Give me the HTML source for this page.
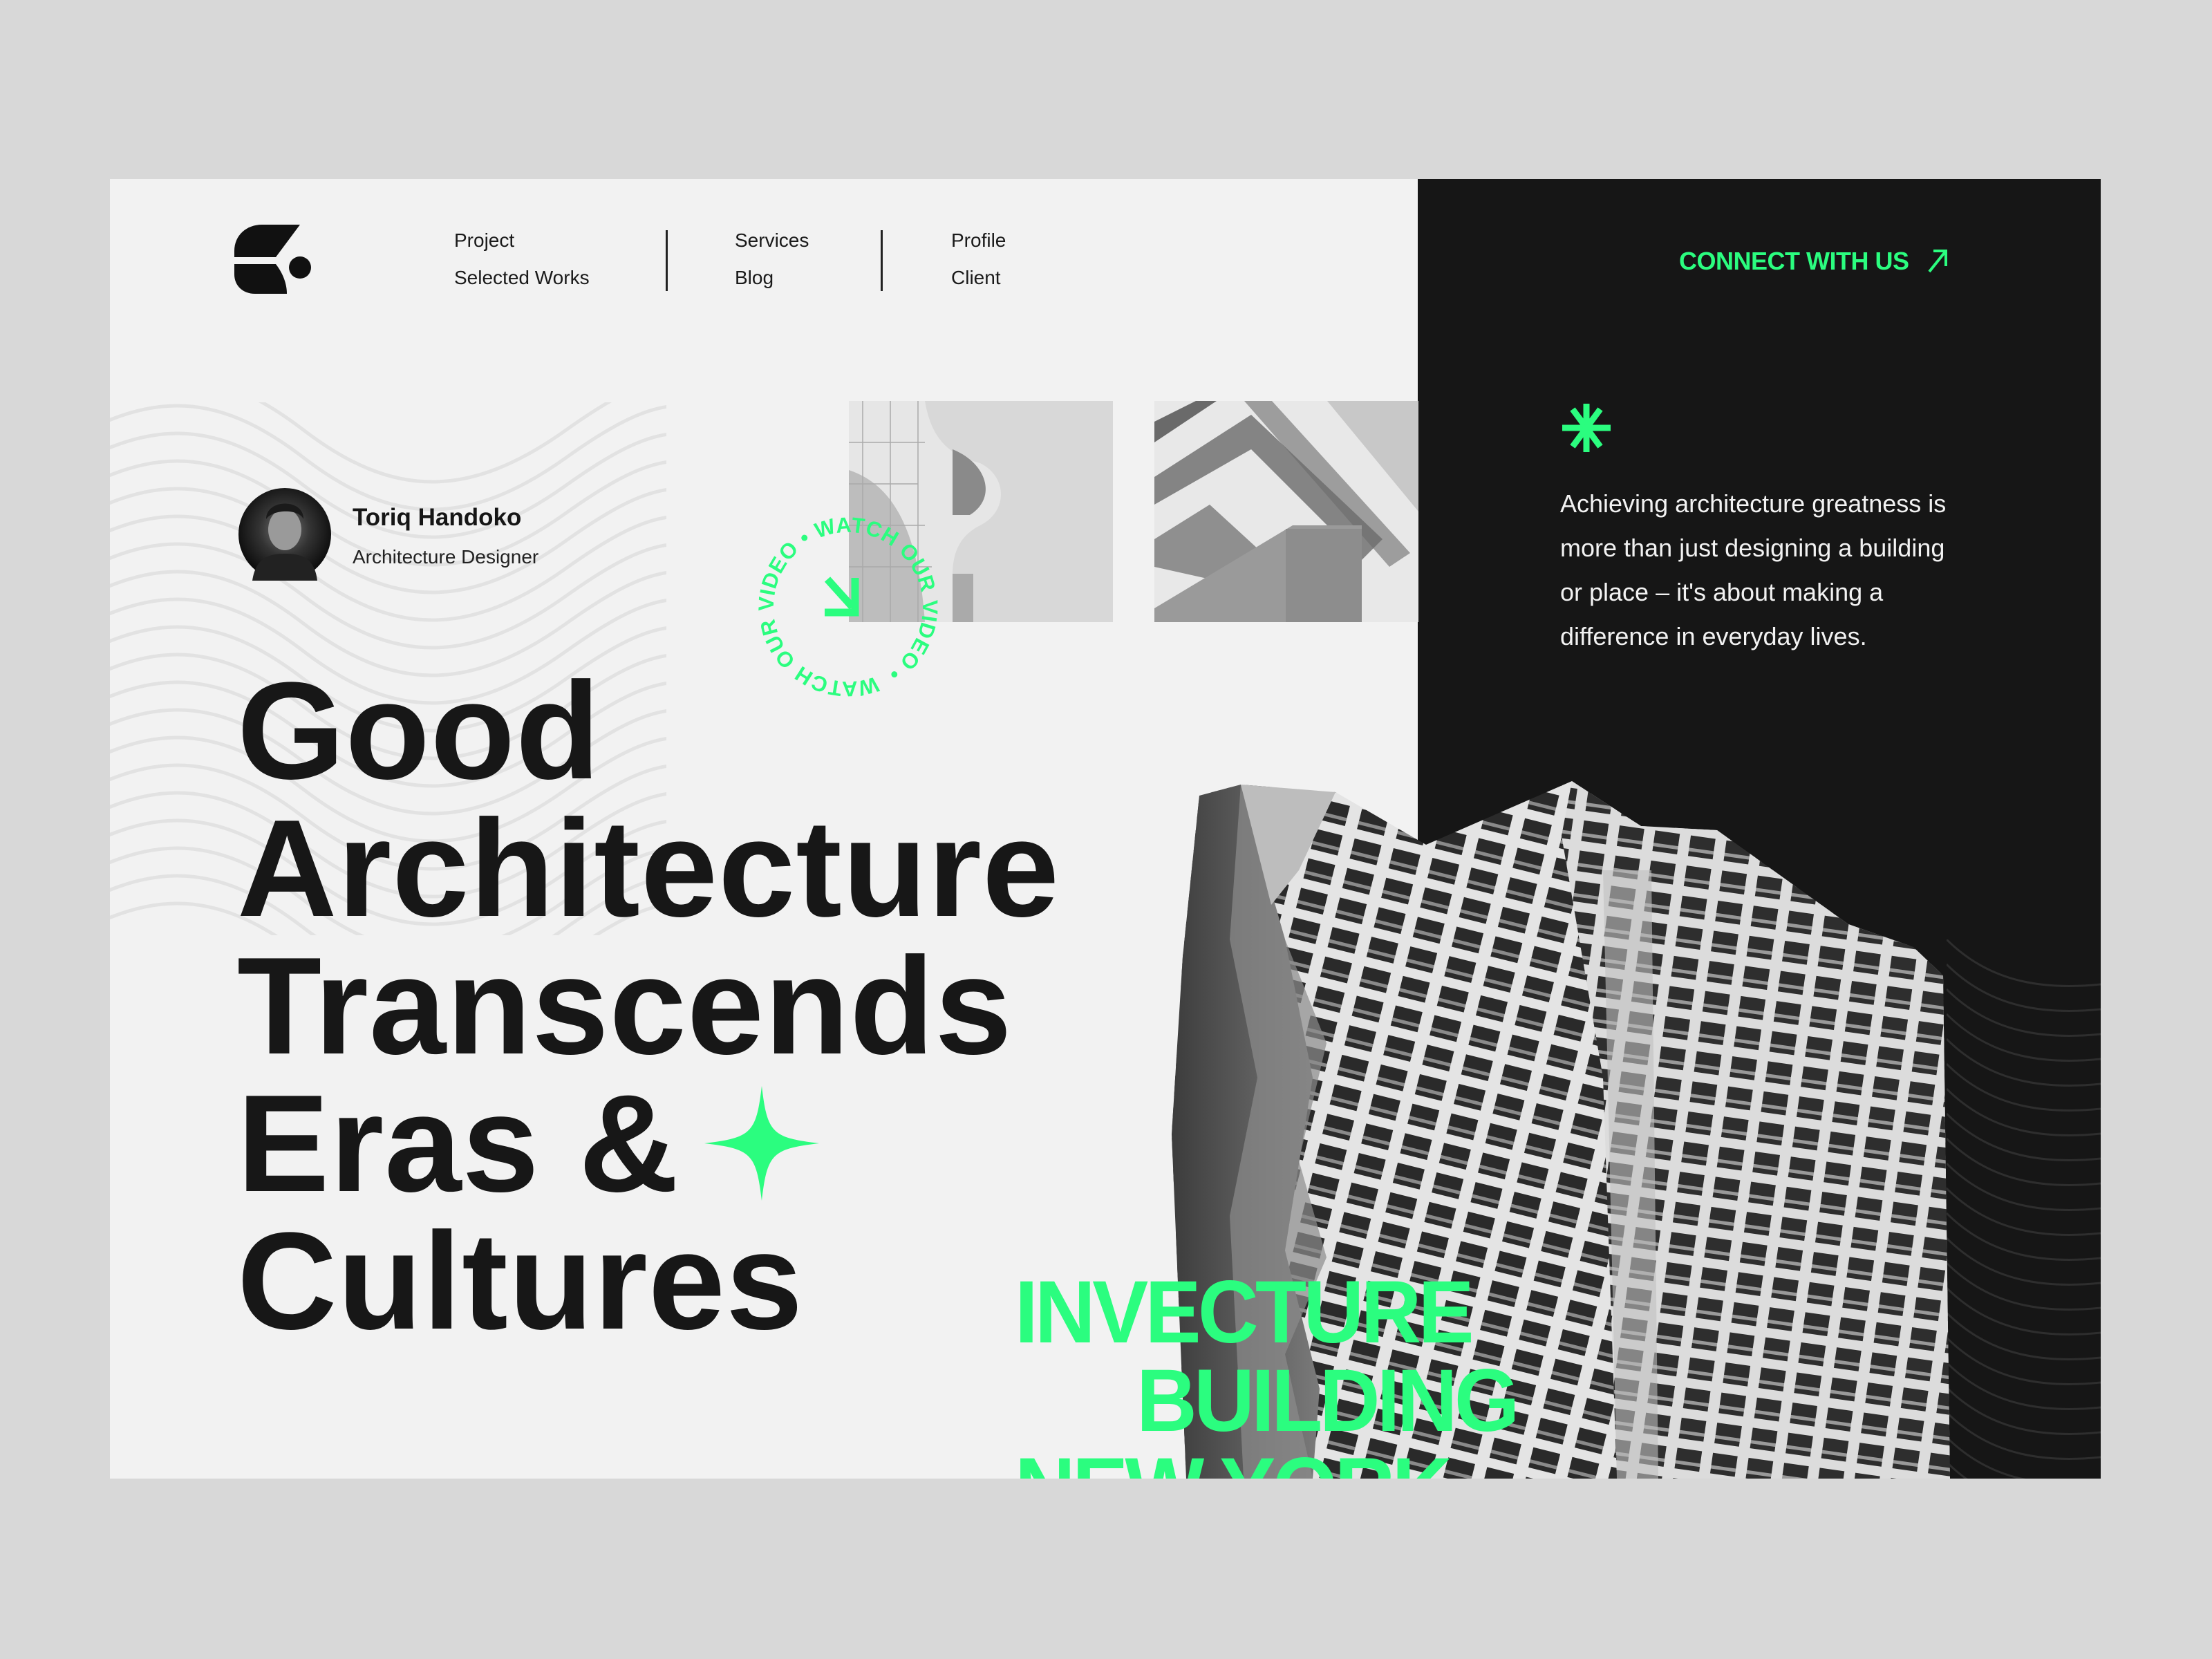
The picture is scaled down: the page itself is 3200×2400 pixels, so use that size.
<!DOCTYPE html>
<html><head><meta charset="utf-8"><style>
html,body{margin:0;padding:0}
body{width:3200px;height:2400px;background:#d8d8d8;position:relative;overflow:hidden;font-family:"Liberation Sans",sans-serif}
.card{position:absolute;left:159px;top:259px;width:2880px;height:1880px;background:#f2f2f2;overflow:hidden}
.abs{position:absolute}
.nav{font-size:28px;color:#1a1a1a;line-height:28px}
.h{position:absolute;left:184px;font-size:200px;font-weight:700;color:#171717;letter-spacing:1px;line-height:200px;white-space:nowrap}
.g{position:absolute;font-size:128px;font-weight:700;color:#2bfd7f;letter-spacing:-5px;line-height:128px;white-space:nowrap;transform:scaleX(0.95);transform-origin:left}
</style></head><body>
<div class="card">
<div class="abs" style="left:1892px;top:0;width:988px;height:1880px;background:#161616"></div>
<svg class="abs" style="left:2657px;top:1100px" width="223" height="780">
<g fill="none" stroke="#2e2e2e" stroke-width="3">
<path id="dw" d="M0,0 C60,60 140,80 260,60"/>
<use href="#dw" y="36"/><use href="#dw" y="72"/><use href="#dw" y="108"/><use href="#dw" y="144"/><use href="#dw" y="180"/><use href="#dw" y="216"/><use href="#dw" y="252"/><use href="#dw" y="288"/><use href="#dw" y="324"/><use href="#dw" y="360"/><use href="#dw" y="396"/><use href="#dw" y="432"/><use href="#dw" y="468"/><use href="#dw" y="504"/><use href="#dw" y="540"/><use href="#dw" y="576"/><use href="#dw" y="612"/><use href="#dw" y="648"/><use href="#dw" y="684"/><use href="#dw" y="720"/><use href="#dw" y="756"/>
</g></svg>
<svg class="abs" style="left:0;top:323px" width="805" height="771">
<g fill="none" stroke="#e2e2e2" stroke-width="5">
<path id="lw" d="M-100,40 C50,-60 150,-60 280,40 S520,140 660,40 S860,-60 950,40"/>
<use href="#lw" y="40"/><use href="#lw" y="80"/><use href="#lw" y="120"/><use href="#lw" y="160"/><use href="#lw" y="200"/><use href="#lw" y="240"/><use href="#lw" y="280"/><use href="#lw" y="320"/><use href="#lw" y="360"/><use href="#lw" y="400"/><use href="#lw" y="440"/><use href="#lw" y="480"/><use href="#lw" y="520"/><use href="#lw" y="560"/><use href="#lw" y="600"/><use href="#lw" y="640"/><use href="#lw" y="680"/><use href="#lw" y="720"/><use href="#lw" y="760"/>
</g></svg>
<svg class="abs" style="left:180px;top:66px" width="112" height="100" viewBox="0 0 112 100">
<path d="M40,0 H95 L60,47 H0 V38 C0,15 18,0 40,0Z" fill="#111"/>
<path d="M0,57 H60 C70,70 76,85 76,100 H30 C12,100 0,88 0,72Z" fill="#111"/>
<ellipse cx="95" cy="62" rx="16" ry="16" fill="#111"/>
</svg>
<div class="abs nav" style="left:498px;top:75px">Project</div>
<div class="abs nav" style="left:498px;top:129px">Selected Works</div>
<div class="abs" style="left:804px;top:74px;width:3px;height:88px;background:#222"></div>
<div class="abs nav" style="left:904px;top:75px">Services</div>
<div class="abs nav" style="left:904px;top:129px">Blog</div>
<div class="abs" style="left:1115px;top:74px;width:3px;height:88px;background:#222"></div>
<div class="abs nav" style="left:1217px;top:75px">Profile</div>
<div class="abs nav" style="left:1217px;top:129px">Client</div>
<div class="abs" style="left:2270px;top:98px;font-size:36px;font-weight:700;color:#2bfd7f;letter-spacing:-0.5px">CONNECT WITH US</div>
<svg class="abs" style="left:2628px;top:98px" width="34" height="40"><path d="M4,36 L28,6 M10,6 H28 V28" stroke="#2bfd7f" stroke-width="4" fill="none"/></svg>
<svg class="abs" style="left:2100px;top:324px" width="72" height="72" viewBox="-36 -36 72 72"><g stroke="#2bfd7f" stroke-width="9"><line x1="0" y1="-35" x2="0" y2="35"/><line x1="-35" y1="0" x2="35" y2="0"/><line x1="-20" y1="-27" x2="20" y2="27"/><line x1="20" y1="-27" x2="-20" y2="27"/></g></svg>
<div class="abs" style="left:2098px;top:438px;width:590px;font-size:36px;line-height:64px;color:#f2f2f2">Achieving architecture greatness is more than just designing a building or place – it's about making a difference in everyday lives.</div>
<svg class="abs" style="left:186px;top:447px" width="134" height="134"><defs><radialGradient id="av" cx="50%" cy="45%" r="55%"><stop offset="0" stop-color="#777"/><stop offset="0.5" stop-color="#333"/><stop offset="1" stop-color="#0a0a0a"/></radialGradient></defs><circle cx="67" cy="67" r="67" fill="url(#av)"/><ellipse cx="67" cy="60" rx="24" ry="30" fill="#9a9a9a"/><path d="M40,45 C40,15 95,15 94,45 C88,30 50,30 40,45Z" fill="#1a1a1a"/><path d="M20,134 C25,100 45,95 67,95 C90,95 110,100 114,134Z" fill="#222"/></svg>
<div class="abs" style="left:351px;top:470px;font-size:35px;font-weight:700;color:#161616">Toriq Handoko</div>
<div class="abs" style="left:351px;top:531px;font-size:28px;color:#222">Architecture Designer</div>
<svg class="abs" style="left:1069px;top:321px" width="382" height="320">
<rect width="382" height="320" fill="#d8d8d8"/>
<path d="M0,0 H110 C120,60 150,80 190,90 C230,110 230,160 190,180 C150,200 140,240 160,320 H0Z" fill="#e6e6e6"/>
<path d="M0,100 C60,120 100,180 110,320 H0Z" fill="#bdbdbd"/>
<path d="M150,70 C200,90 215,140 175,165 L150,165Z" fill="#8a8a8a"/>
<rect x="150" y="250" width="30" height="70" fill="#aaa"/>
<g stroke="#aaa" stroke-width="1.5" fill="none"><path d="M20,0V320M60,0V320M100,0V320M0,60H110M0,120H100M0,180H110M0,240H120"/></g>
</svg>
<svg class="abs" style="left:1511px;top:321px" width="382" height="320">
<rect width="382" height="320" fill="#e8e8e8"/>
<path d="M250,0 H382 V160Z" fill="#c8c8c8"/>
<g fill="#6a6a6a"><path d="M0,30 L60,0 H90 L0,60Z"/><path d="M0,110 L140,20 L330,200 L300,230 L140,70 L0,150Z" opacity=".8"/><path d="M0,200 L80,150 L200,260 L180,280 L0,240Z" opacity=".7"/><path d="M130,0 L170,0 L370,220 L340,240Z" opacity=".6"/></g>
<path d="M0,320 V300 L200,180 H300 V320Z" fill="#9a9a9a"/>
<rect x="190" y="185" width="110" height="135" fill="#8d8d8d"/>
</svg>
<svg class="abs" style="left:918px;top:469px" width="300" height="300" viewBox="0 0 300 300">
<defs><path id="cp" d="M150,150 m-108,0 a108,108 0 1,1 216,0 a108,108 0 1,1 -216,0"/></defs>
<g transform="rotate(-112 150 150)"><text font-family="Liberation Sans" font-weight="700" font-size="31" fill="#2bfd7f"><textPath href="#cp" textLength="660" lengthAdjust="spacing">WATCH OUR VIDEO • WATCH OUR VIDEO •</textPath></text></g>
<path d="M120,110 L156,150 M160,108 V158 H116" stroke="#2bfd7f" stroke-width="11" fill="none"/>
</svg>
<div class="h" style="top:699px">Good</div>
<div class="h" style="top:898px">Architecture</div>
<div class="h" style="top:1097px">Transcends</div>
<div class="h" style="top:1296px">Eras &amp;</div>
<div class="h" style="top:1495px">Cultures</div>
<svg class="abs" style="left:860px;top:1312px" width="166" height="166" viewBox="-83 -83 166 166"><path d="M0,-83 C8,-15 15,-8 83,0 C15,8 8,15 0,83 C-8,15 -15,8 -83,0 C-15,-8 -8,-15 0,-83Z" fill="#2bfd7f"/></svg>
<svg class="abs" style="left:0;top:0" width="2880" height="1880">
<defs>
<pattern id="win" x="0" y="0" width="58" height="44" patternUnits="userSpaceOnUse" patternTransform="rotate(14)">
<rect width="58" height="44" fill="#e4e4e4"/><rect x="6" y="6" width="40" height="30" fill="#2a2a2a"/><rect x="6" y="24" width="40" height="5" fill="#8a8a8a"/></pattern>
<pattern id="win2" x="0" y="0" width="52" height="44" patternUnits="userSpaceOnUse" patternTransform="rotate(8)">
<rect width="52" height="44" fill="#dcdcdc"/><rect x="5" y="6" width="36" height="30" fill="#2e2e2e"/><rect x="5" y="24" width="36" height="5" fill="#999"/></pattern>
<linearGradient id="lf" x1="0" y1="0" x2="1" y2="0"><stop offset="0" stop-color="#3c3c3c"/><stop offset="1" stop-color="#7a7a7a"/></linearGradient>
</defs>
<polygon points="1576,892 1636,876 1773,887 1904,963 2115,871 2215,936 2325,942 2515,1078 2609,1111 2652,1152 2662,1880 1557,1880 1536,1382 1552,1125" fill="url(#win)"/>
<polygon points="2115,871 2215,936 2325,942 2515,1078 2609,1111 2652,1152 2662,1880 2180,1880 2160,1300 2100,950" fill="url(#win2)"/>
<polygon points="1576,892 1636,876 1700,1100 1740,1300 1700,1550 1750,1750 1740,1880 1557,1880 1536,1382 1552,1125" fill="url(#lf)"/>
<polygon points="1636,876 1700,1100 1760,1250 1720,1420 1760,1560 1700,1700 1740,1880 1640,1880 1620,1500 1660,1300 1620,1100" fill="#8c8c8c" opacity=".7"/>
<polygon points="1636,876 1773,887 1720,1000 1680,1050" fill="#bdbdbd"/>
<polygon points="2160,1000 2230,1000 2240,1880 2180,1880" fill="#bfbfbf" opacity=".6"/>
</svg>
<div class="g" style="left:1309px;top:1576px">INVECTURE</div>
<div class="g" style="left:1485px;top:1704px">BUILDING</div>
<div class="g" style="left:1309px;top:1832px">NEW YORK</div>
</div>
</body></html>
